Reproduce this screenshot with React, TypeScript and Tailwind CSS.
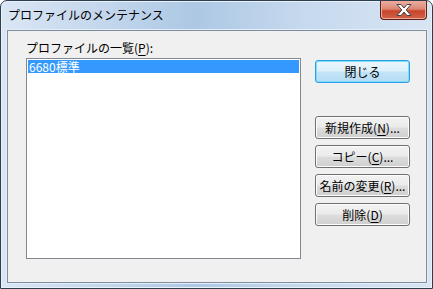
import React from "react";

const font = "font-['Noto_Sans_CJK_JP','Noto_Sans',sans-serif]";

function WinButton({
  label,
  mnemonic,
  after = "",
  isDefault = false,
}: {
  label: string;
  mnemonic?: string;
  after?: string;
  isDefault?: boolean;
}) {
  return (
    <button
      type="button"
      className={
        isDefault
          ? "flex h-[23px] w-[95px] items-center justify-center rounded-[3px] border border-[#2b9fe0] bg-[linear-gradient(to_bottom,#ecf7fd_0%,#dcf0fb_48%,#c3e4f7_52%,#b5dcf4_100%)] text-[12px] leading-none text-black shadow-[inset_0_0_0_1px_#7ddcff]"
          : "flex h-[23px] w-[95px] items-center justify-center rounded-[3px] border border-[#707070] bg-[linear-gradient(to_bottom,#f2f2f2_0%,#ebebeb_48%,#dddddd_52%,#cfcfcf_100%)] text-[12px] leading-none text-black shadow-[inset_0_0_0_1px_#fcfcfc]"
      }>
      <span>
        {label}
        {mnemonic && (
          <>
            (<span className="underline underline-offset-2">{mnemonic}</span>)
          </>
        )}
        {after}
      </span>
    </button>
  );
}

export default function App() {
  return (
    <div className={`h-[289px] w-[433px] bg-white ${font}`}>
      <div className="flex h-[289px] w-[433px] flex-col rounded-t-[7px] border border-[#2e3e4e] bg-[linear-gradient(to_right,#dae6f4_0%,#c2d6ec_25%,#adc8e4_45%,#c6d9ee_70%,#d8e5f3_100%)] shadow-[inset_0_0_0_1px_#e9f1fa]">
        {/* title bar */}
        <div className="flex h-[29px] items-start justify-between pl-[7px] pr-[5px]">
          <span className="mt-[6px] text-[12px] leading-[16px] text-black">
            プロファイルのメンテナンス
          </span>
          <div className="flex h-[19px] w-[47px] items-center justify-center rounded-b-[4px] border border-t-0 border-[#5a2118] bg-[linear-gradient(to_bottom,#eab0a2_0%,#dc8672_45%,#c8452c_55%,#d0634a_100%)] shadow-[inset_0_0_0_1px_#f0a898]">
            <svg width="18" height="14" viewBox="0 0 18 14">
              <path
                d="M2 1.5 L6 1.5 L9 5 L12 1.5 L16 1.5 L11.2 7 L16 12.5 L12 12.5 L9 9 L6 12.5 L2 12.5 L6.8 7 Z"
                fill="#ffffff"
                stroke="#454545"
                strokeWidth="1"
                strokeLinejoin="round"
              />
            </svg>
          </div>
        </div>

        {/* client area */}
        <div className="ml-[6px] mr-[5px] h-[253px] border border-[#7e8e9f] bg-[#f0f0f0] shadow-[0_0_0_1px_#e4eef9]">
          <div className="flex gap-[14px] pl-[18px] pt-[9px]">
            <div className="flex flex-col">
              <div className="h-[16px] text-[12px] leading-[16px] text-black">
                プロファイルの一覧(<span className="underline underline-offset-2">P</span>):
              </div>
              <div className="mt-[2px] h-[201px] w-[275px] border border-[#828790] bg-white p-[1px]">
                <div className="h-[13px] bg-[#3399ff] pl-[1px] text-[12px] leading-[13px] text-white">
                  6680標準
                </div>
              </div>
            </div>

            <div className="flex flex-col pt-[20px]">
              <WinButton label="閉じる" isDefault />
              <div className="mt-[33px] flex flex-col gap-[6px]">
                <WinButton label="新規作成" mnemonic="N" after="..." />
                <WinButton label="コピー" mnemonic="C" after="..." />
                <WinButton label="名前の変更" mnemonic="R" after="..." />
                <WinButton label="削除" mnemonic="D" />
              </div>
            </div>
          </div>
        </div>
      </div>
    </div>
  );
}
